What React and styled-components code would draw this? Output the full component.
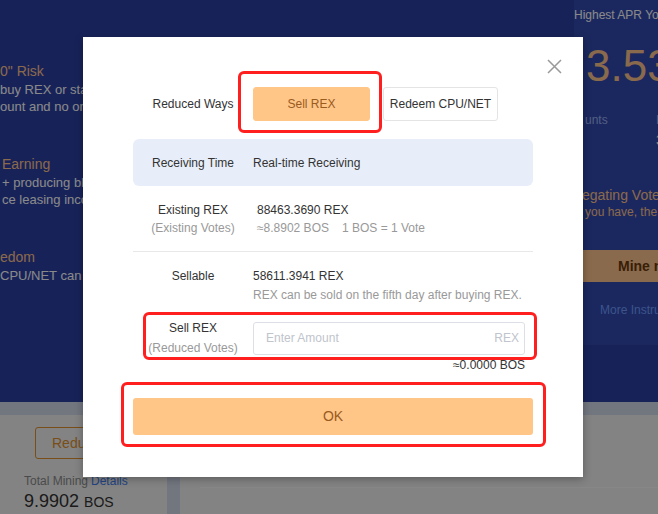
import React from 'react'
import styled, { createGlobalStyle } from 'styled-components'

const GlobalStyle = createGlobalStyle`
  body {
    margin: 0;
    font-family: "Liberation Sans", Arial, sans-serif;
  }
`;

const Page = styled.div`
  position: relative;
  width: 658px;
  height: 514px;
  overflow: hidden;
  background: #d3dbeb;
`;

/* ---------- page under the dialog ---------- */

const Hero = styled.section`
  display: flex;
  height: 402px;
  background: #2b3fa5;
`;

const Features = styled.div`
  flex: 1;
  display: flex;
  flex-direction: column;
  gap: 39px;
  padding-top: 61px;
  white-space: nowrap;
  overflow: hidden;
`;

const Feature = styled.div`
  padding-left: ${({ indent }) => indent || 0}px;
`;

const FeatureTitle = styled.div`
  font-size: 14px;
  line-height: 20px;
  color: #ffc48d;
`;

const FeatureText = styled.div`
  font-size: 13px;
  line-height: 17px;
  color: #ffffff;
`;

const Side = styled.aside`
  width: 84px;
  height: 345px;
  background: #324ab0;
  display: flex;
  flex-direction: column;
  white-space: nowrap;
`;

const SideTitle = styled.div`
  padding-top: 7px;
  font-size: 12px;
  line-height: 16px;
  color: #ffffff;
`;

const BigRate = styled.div`
  margin-top: 21px;
  padding-left: 12px;
  font-size: 44px;
  line-height: 44px;
  color: #ffc48d;
`;

const Stats = styled.div`
  display: flex;
  margin-top: 24px;
  padding-left: 11px;
`;

const Stat = styled.div`
  width: ${({ w }) => w}px;
  flex-shrink: 0;
`;

const StatLabel = styled.div`
  font-size: 12px;
  line-height: 16px;
  color: #98b0f0;
`;

const StatValue = styled.div`
  margin-top: 4px;
  font-size: 14px;
  line-height: 16px;
  color: #ffffff;
`;

const SideHeading = styled.div`
  margin-top: 38px;
  padding-left: 8px;
  font-size: 14px;
  line-height: 18px;
  color: #ffc48d;
`;

const SideText = styled.div`
  padding-left: 11px;
  font-size: 12px;
  line-height: 16px;
  color: #ffc48d;
`;

const MineButton = styled.div`
  margin-top: 30px;
  height: 32px;
  padding-left: 44px;
  background: #ffc48d;
  color: #6a3a0c;
  font-size: 14px;
  font-weight: bold;
  line-height: 32px;
`;

const MoreLink = styled.div`
  margin-top: 20px;
  padding-left: 26px;
  font-size: 12px;
  line-height: 16px;
  color: #6f9cff;
`;

const Body = styled.div`
  display: flex;
  gap: 13px;
  padding-top: 13px;
  height: 99px;
`;

const LeftCard = styled.div`
  width: 167px;
  background: #f2f2f2;
  padding: 12px 0 0 24px;
  box-sizing: border-box;
  white-space: nowrap;
`;

const OutlineButton = styled.div`
  margin-left: 11px;
  width: 130px;
  height: 32px;
  box-sizing: border-box;
  border: 1px solid #e0912e;
  border-radius: 3px;
  padding-left: 16px;
  font-size: 14px;
  line-height: 30px;
  color: #e0912e;
`;

const MiningLabel = styled.div`
  margin-top: 14px;
  font-size: 12px;
  line-height: 16px;
  color: #8a8a8a;

  span {
    color: #3f7ef0;
    margin-left: 3px;
  }
`;

const MiningValue = styled.div`
  margin-top: 2px;
  font-size: 18px;
  line-height: 20px;
  color: #333333;

  small {
    font-size: 14px;
  }
`;

const RightCard = styled.div`
  flex: 1;
  background: #f2f2f2;
  padding: 72px 0 0 20px;
`;

const CardRule = styled.div`
  height: 1px;
  background: #fafafa;
`;

/* ---------- dialog ---------- */

const Backdrop = styled.div`
  position: absolute;
  inset: 0;
  background: rgba(0, 0, 0, 0.46);
`;

const Modal = styled.div`
  position: absolute;
  left: 83px;
  top: 37px;
  width: 500px;
  box-sizing: border-box;
  padding: 50px 50px 42px;
  background: #ffffff;
  box-shadow: 0 2px 8px rgba(0, 0, 0, 0.3);
  color: #333333;
  font-size: 12px;
`;

const Close = styled.div`
  position: absolute;
  right: 21px;
  top: 22px;
  width: 15px;
  height: 15px;
  display: flex;
`;

const Row = styled.div`
  display: flex;
  align-items: ${({ center }) => (center ? 'center' : 'flex-start')};
  margin-top: ${({ mt }) => mt || 0}px;
`;

const Label = styled.div`
  width: 120px;
  flex-shrink: 0;
  text-align: center;
  line-height: ${({ lh }) => lh || 18}px;
`;

const Sub = styled.div`
  color: #999999;
`;

const Value = styled.div`
  flex: 1;
  padding-left: ${({ indent }) => indent || 0}px;
  line-height: ${({ lh }) => lh || 18}px;
`;

const Note = styled.div`
  color: #999999;

  span {
    margin-left: 13px;
  }
`;

const Ways = styled.div`
  display: flex;
  gap: 13px;
`;

const WayButton = styled.div`
  height: 34px;
  box-sizing: border-box;
  width: ${({ w }) => w}px;
  border-radius: 3px;
  border: 1px solid ${({ active }) => (active ? '#ffc688' : '#e4e4e4')};
  background: ${({ active }) => (active ? '#ffc688' : '#ffffff')};
  color: ${({ active }) => (active ? '#9a5b1f' : '#333333')};
  font-size: 12px;
  line-height: 32px;
  text-align: center;
`;

const InfoBox = styled.div`
  display: flex;
  align-items: center;
  height: 47px;
  margin-top: 18px;
  border-radius: 6px;
  background: #e8eef9;
`;

const Divider = styled.div`
  height: 1px;
  margin-top: 14px;
  background: #e8e8e8;
`;

const InputBox = styled.div`
  display: flex;
  align-items: center;
  width: 272px;
  height: 33px;
  box-sizing: border-box;
  border: 1px solid #dcdfe6;
  border-radius: 3px;
  padding: 0 5px 0 12px;
`;

const AmountInput = styled.input`
  flex: 1;
  min-width: 0;
  border: none;
  outline: none;
  padding: 0;
  font-family: inherit;
  font-size: 12px;
  color: #333333;

  &::placeholder {
    color: #c0c4cc;
  }
`;

const Suffix = styled.span`
  color: #c0c4cc;
`;

const Hint = styled.div`
  margin-top: -2px;
  padding-right: 8px;
  line-height: 18px;
  text-align: right;
`;

const OkButton = styled.div`
  margin-top: 24px;
  height: 37px;
  border-radius: 3px;
  background: #ffc688;
  color: #9a5b1f;
  font-size: 14px;
  line-height: 37px;
  text-align: center;
`;

/* red marks drawn on the screenshot */
const Mark = styled.div`
  position: absolute;
  left: ${({ x }) => x}px;
  top: ${({ y }) => y}px;
  width: ${({ w }) => w}px;
  height: ${({ h }) => h}px;
  box-sizing: border-box;
  border: 3px solid #ff1f1f;
  border-radius: 6px;
`;

const App = () => {
  return (
    <>
      <GlobalStyle />
      <Page>
        <Hero>
          <Features>
            <Feature indent={-2}>
              <FeatureTitle>0" Risk</FeatureTitle>
              <FeatureText>buy REX or stake</FeatureText>
              <FeatureText>ount and no one can</FeatureText>
            </Feature>
            <Feature indent={2}>
              <FeatureTitle>Earning</FeatureTitle>
              <FeatureText>+ producing block</FeatureText>
              <FeatureText>ce leasing income</FeatureText>
            </Feature>
            <Feature>
              <FeatureTitle>edom</FeatureTitle>
              <FeatureText>CPU/NET can re</FeatureText>
            </Feature>
          </Features>
          <Side>
            <SideTitle>Highest APR You Can Get</SideTitle>
            <BigRate>3.53%</BigRate>
            <Stats>
              <Stat w={71}>
                <StatLabel>unts</StatLabel>
              </Stat>
              <Stat w={60}>
                <StatLabel>Income</StatLabel>
                <StatValue>3.5</StatValue>
              </Stat>
            </Stats>
            <SideHeading>egating Vote Mining</SideHeading>
            <SideText>you have, the more</SideText>
            <MineButton>Mine now</MineButton>
            <MoreLink>More Instructions</MoreLink>
          </Side>
        </Hero>
        <Body>
          <LeftCard>
            <OutlineButton>Reduced</OutlineButton>
            <MiningLabel>
              Total Mining<span>Details</span>
            </MiningLabel>
            <MiningValue>
              9.9902 <small>BOS</small>
            </MiningValue>
          </LeftCard>
          <RightCard>
            <CardRule />
          </RightCard>
        </Body>

        <Backdrop />

        <Modal>
          <Close>
            <svg width="15" height="15" viewBox="0 0 15 15">
              <path d="M1 1 L14 14 M14 1 L1 14" stroke="#999" strokeWidth="1.5" fill="none" />
            </svg>
          </Close>

          <Row center>
            <Label>Reduced Ways</Label>
            <Ways>
              <WayButton active w={117}>Sell REX</WayButton>
              <WayButton w={115}>Redeem CPU/NET</WayButton>
            </Ways>
          </Row>

          <InfoBox>
            <Label>Receiving Time</Label>
            <Value>Real-time Receiving</Value>
          </InfoBox>

          <Row mt={15}>
            <Label>
              <div>Existing REX</div>
              <Sub>(Existing Votes)</Sub>
            </Label>
            <Value indent={4}>
              <div>88463.3690 REX</div>
              <Note>
                ≈8.8902 BOS<span>1 BOS = 1 Vote</span>
              </Note>
            </Value>
          </Row>

          <Divider />

          <Row mt={15}>
            <Label>Sellable</Label>
            <Value lh={19}>
              <div>58611.3941 REX</div>
              <Note>REX can be sold on the fifth day after buying REX.</Note>
            </Value>
          </Row>

          <Row center mt={13}>
            <Label lh={20}>
              <div>Sell REX</div>
              <Sub>(Reduced Votes)</Sub>
            </Label>
            <InputBox>
              <AmountInput placeholder="Enter Amount" />
              <Suffix>REX</Suffix>
            </InputBox>
          </Row>

          <Hint>≈0.0000 BOS</Hint>

          <OkButton>OK</OkButton>
        </Modal>

        <Mark x={238} y={71} w={144} h={62} />
        <Mark x={143} y={312} w={394} h={48} />
        <Mark x={121} y={382} w={425} h={65} />
      </Page>
    </>
  )
}

export default App
